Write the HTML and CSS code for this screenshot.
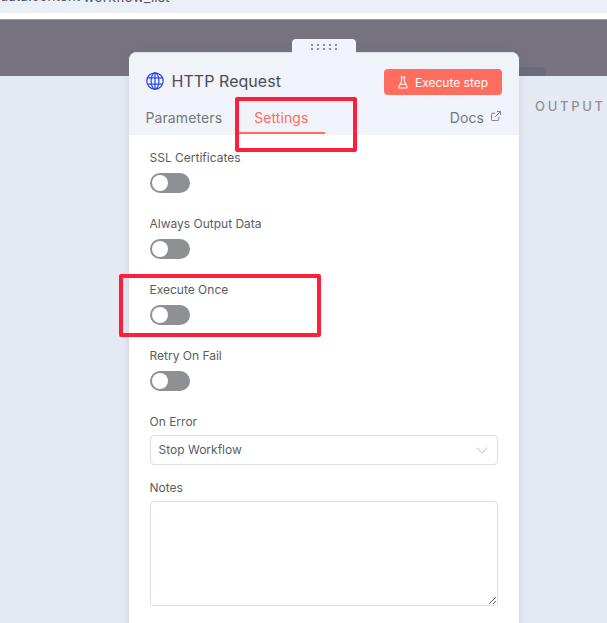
FILE: index.html
```html
<!DOCTYPE html>
<html lang="en">
<head>
<meta charset="utf-8">
<title>HTTP Request</title>
<link rel="stylesheet" href="styles.css">
</head>
<body>
<div class="topbar"><div class="topbar-text"><span class="path">data.content</span><span class="name">workflow_list</span></div></div>
<div class="gap"></div>
<main class="stage">
  <div class="backdrop"></div>
  <div class="tab-peek"></div>
  <div class="output-label">OUTPUT</div>
  <section class="panel">
    <div class="grip"><svg width="26" height="6" viewBox="0 0 26 6"><g fill="#8d8f96"><rect x="0" y="0" width="2" height="2"/><rect x="6" y="0" width="2" height="2"/><rect x="12" y="0" width="2" height="2"/><rect x="18" y="0" width="2" height="2"/><rect x="24" y="0" width="2" height="2"/><rect x="0" y="4" width="2" height="2"/><rect x="6" y="4" width="2" height="2"/><rect x="12" y="4" width="2" height="2"/><rect x="18" y="4" width="2" height="2"/><rect x="24" y="4" width="2" height="2"/></g></svg></div>
    <header class="panel-head">
      <div class="title-row">
        <div class="title">
          <svg class="globe" width="18" height="18" viewBox="0 0 18 18" fill="none" stroke="#2b44ea" stroke-width="1.200"><circle cx="9" cy="9" r="8.200"/><ellipse cx="9" cy="9" rx="3.900" ry="8.200"/><path d="M1.800 5.900h14.400M1.800 12.100h14.400M9 .8v16.400"/></svg>
          <span>HTTP Request</span>
        </div>
        <button class="exec"><svg width="10" height="13" viewBox="0 0 11 14" fill="none" stroke="#fff" stroke-width="1.200"><path d="M3 1h5M4 1v4.200L1 12c-.2.5.1 1 .7 1h7.600c.6 0 .9-.5.7-1L7 5.200V1M2.600 9h5.800"/></svg>Execute step</button>
      </div>
      <nav class="tabs">
        <a class="tab">Parameters</a>
        <a class="tab active">Settings</a>
        <a class="docs">Docs<svg width="10" height="10" viewBox="0 0 11 11" fill="none" stroke="#73757c" stroke-width="1"><path d="M8.500 6.500v3a1 1 0 0 1-1 1h-6a1 1 0 0 1-1-1v-6a1 1 0 0 1 1-1h3M6.500.5h4v4M10.500.5 4.500 6.500"/></svg></a>
      </nav>
    </header>
    <div class="panel-body">
      <div class="field"><label>SSL Certificates</label><span class="toggle"></span></div>
      <div class="field"><label>Always Output Data</label><span class="toggle"></span></div>
      <div class="field"><label>Execute Once</label><span class="toggle"></span></div>
      <div class="field"><label>Retry On Fail</label><span class="toggle"></span></div>
      <div class="field"><label>On Error</label>
        <div class="select"><span>Stop Workflow</span><svg width="12" height="7" viewBox="0 0 12 7" fill="none" stroke="#c0c2c8" stroke-width="1"><path d="M.7.700 6 6l5.300-5.300"/></svg></div>
      </div>
      <div class="field notes-field"><label>Notes</label><textarea class="notes"></textarea></div>
    </div>
  </section>
</main>
<div class="mark mark-settings"></div>
<div class="mark mark-once"></div>
</body>
</html>
```
FILE: styles.css
```css
* { box-sizing: border-box; }
html, body { margin: 0; height: 623px; overflow: hidden; background: #fff; }
body { font-family: Inter, "Liberation Sans", sans-serif; color: #54565c; position: relative; }
.topbar { height: 13px; background: #ebeff8; overflow: hidden; position: relative; }
.topbar-text { position: absolute; left: 0; top: -12px; display: flex; gap: 3px; line-height: 17px; color: #55575d; white-space: nowrap; }
.path { font-size: 13.500px; }
.name { font-size: 14px; }
.gap { height: 6px; background: #fff; }
.stage { position: relative; height: 604px; background: #e5e9f3; overflow: hidden; }
.backdrop { height: 57px; background: #76737e; border-top: 1px solid #9a98a0; }
.tab-peek { position: absolute; left: 505px; top: 48px; width: 40px; height: 9px; background: #6b6c79; border-radius: 4px 4px 0 0; }
.output-label { position: absolute; left: 535px; top: 79px; font-size: 13px; line-height: 17px; font-weight: 500; letter-spacing: 2.700px; color: #8f9197; white-space: nowrap; }
.panel { position: absolute; left: 129px; top: 33px; width: 390px; height: 600px; background: #fff; border-radius: 8px 8px 0 0; box-shadow: 0 0 10px rgba(100,110,160,.18); }
.grip { position: absolute; left: 163px; top: -13px; width: 64px; height: 14px; background: #f0f3f9; border-radius: 4px 4px 0 0; display: flex; align-items: center; justify-content: center; padding-top: 1px; }
.panel-head { height: 83px; background: #f0f3f9; border-radius: 8px 8px 0 0; border-top: 1px solid #dfe2ec; padding: 16px 17px 0 16.500px; }
.title-row { display: flex; justify-content: space-between; align-items: center; height: 26px; }
.title { display: flex; align-items: center; gap: 8px; font-size: 16px; font-weight: 400; letter-spacing: .05px; color: #4c4e54; margin-top: -2px; }
.exec { width: 118px; height: 26px; border: 0; border-radius: 4px; background: #ff6d5f; color: #fff; font: 400 12px Inter, sans-serif; display: flex; align-items: center; justify-content: center; gap: 7px; padding: 0; }
.tabs { display: flex; align-items: flex-end; height: 39px; font-size: 14px; font-weight: 400; letter-spacing: .1px; color: #75777e; }
.tab { display: block; height: 32px; padding-top: 7px; line-height: 17px; }
.tab.active { margin-left: 16px; padding: 7px 16px 0 16px; width: 87px; color: #ff6d5f; border-bottom: 2px solid #ff6d5f; }
.docs { margin-left: auto; height: 32px; padding-top: 7px; line-height: 17px; display: flex; align-items: flex-start; gap: 7px; margin-right: 1px; }
.docs svg { margin-top: 2px; }
.panel-body { padding: 15px 21px 0 20.500px; display: flex; flex-direction: column; }
.field { height: 66px; }
.field label { display: block; font-size: 12px; line-height: 16px; color: #5a5c62; }
.toggle { display: block; margin-top: 7px; width: 40px; height: 20px; border-radius: 10px; background: #8e9094; position: relative; }
.toggle::after { content: ""; position: absolute; left: 2px; top: 2px; width: 16px; height: 16px; border-radius: 50%; background: #fff; }
.select { margin-top: 5px; height: 30px; width: 348px; border: 1px solid #dcdde6; border-radius: 4px; display: flex; align-items: center; justify-content: space-between; padding: 0 9px 2px 8px; font-size: 12px; color: #5a5c62; }
.select svg { margin-top: 2px; }
.notes-field label { margin-bottom: 5px; }
.notes { display: block; width: 348px; height: 105px; border: 1px solid #dcdde6; border-radius: 4px; background: #fff; outline: 0; resize: both; }
.mark { position: absolute; border: 4px solid #ff1f3d; border-radius: 2px; pointer-events: none; }
.mark-settings { left: 235px; top: 97px; width: 122px; height: 55px; }
.mark-once { left: 119px; top: 274px; width: 202px; height: 63px; }
```
